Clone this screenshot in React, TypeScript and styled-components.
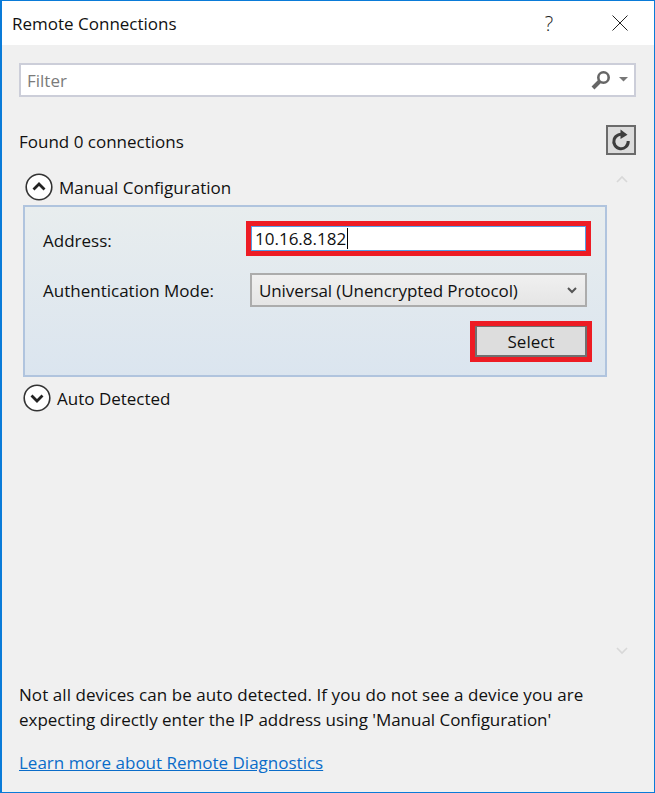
import React from 'react';
import styled, {createGlobalStyle} from 'styled-components';

const Global = createGlobalStyle`
  html, body {
    margin: 0;
    padding: 0;
    background: #efefef;
  }
  * {
    box-sizing: border-box;
  }
`;

const Window = styled.div`
  width: 655px;
  height: 793px;
  display: flex;
  flex-direction: column;
  background: #f0f0f0;
  border: 1px solid #0a7bd8;
  border-left-width: 2px;
  font-family: "Open Sans", "Noto Sans", sans-serif;
  font-size: 17px;
  color: #111;
`;

const TitleBar = styled.div`
  height: 44px;
  flex: 0 0 auto;
  background: #fff;
  display: flex;
  align-items: center;
  padding: 0 26px 0 10px;
`;

const Title = styled.div`
  flex: 1 1 auto;
`;

const HelpGlyph = styled.div`
  width: 16px;
  margin-right: 55px;
  text-align: center;
  font-size: 20px;
  font-weight: 300;
  color: #222;
`;

const Body = styled.div`
  flex: 1 1 auto;
  display: flex;
  flex-direction: column;
  padding: 18px 18px 0 17px;
`;

const FilterBox = styled.div`
  height: 34px;
  display: flex;
  align-items: center;
  padding: 0 3px 0 6px;
  background: #fff;
  border: 2px solid #ccced9;
`;

const FilterText = styled.div`
  flex: 1 1 auto;
  color: #7b7b7b;
`;

const FoundRow = styled.div`
  display: flex;
  align-items: center;
  justify-content: space-between;
  margin-top: 28px;
  height: 30px;
`;

const FoundText = styled.div`
  padding-top: 2px;
`;

const RefreshButton = styled.div`
  width: 30px;
  height: 30px;
  display: flex;
  align-items: center;
  justify-content: center;
  background: #dcdcdc;
  border: 2px solid #6b6b6b;
`;

const SectionHeader = styled.div<{$indent: number}>`
  display: flex;
  align-items: center;
  gap: 6px;
  height: 28px;
  padding-left: ${p => p.$indent}px;
`;

const ScrollArea = styled.div`
  flex: 1 1 auto;
  display: flex;
  margin-top: 18px;
`;

const ScrollContent = styled.div`
  width: 588px;
  flex: 0 0 auto;
`;

const ScrollBar = styled.div`
  flex: 1 1 auto;
  display: flex;
  flex-direction: column;
  align-items: center;
  justify-content: space-between;
  padding-top: 2px;
  height: 482px;
`;

const Panel = styled.div`
  width: 584px;
  height: 172px;
  margin: 4px 0 7px 4px;
  padding: 14px 20px 0 18px;
  background: linear-gradient(#e8edee, #dbe5ef);
  border: 2px solid #b0c4de;
`;

const FieldRow = styled.div`
  display: flex;
  align-items: center;
  height: 35px;
  margin-bottom: 16px;
`;

const FieldLabel = styled.div<{$drop: number}>`
  width: 207px;
  flex: 0 0 auto;
  padding-top: ${p => p.$drop}px;
`;

const HighlightBox = styled.div`
  border: 5px solid #ed1c24;
`;

const AddressHighlight = styled(HighlightBox)`
  width: 345px;
  height: 35px;
  margin-left: -4px;
  flex: 0 0 auto;
`;

const AddressInput = styled.div`
  height: 100%;
  display: flex;
  align-items: center;
  padding-left: 3px;
  background: #fff;
  border: 1px solid #569de5;
`;

const Caret = styled.span`
  display: inline-block;
  width: 1px;
  height: 21px;
  margin-left: 1px;
  background: #000;
`;

const Combo = styled.div`
  width: 337px;
  height: 34px;
  flex: 0 0 auto;
  display: flex;
  align-items: center;
  justify-content: space-between;
  padding: 1px 8px 0 7px;
  letter-spacing: -0.1px;
  background: linear-gradient(#f0f0f0, #e5e5e5);
  border: 2px solid #acacac;
`;

const ButtonRow = styled.div`
  display: flex;
  justify-content: flex-end;
  margin: -2px -7px 0 0;
`;

const SelectHighlight = styled(HighlightBox)`
  width: 122px;
  height: 41px;
`;

const SelectButton = styled.div`
  height: 100%;
  display: flex;
  align-items: center;
  justify-content: center;
  background: #dddddd;
  border: solid #707070;
  border-width: 1px 2px 2px 2px;
`;

const NoteLine = styled.div<{$spacing: number}>`
  line-height: 25px;
  white-space: nowrap;
  letter-spacing: ${p => p.$spacing}px;
`;

const LearnLink = styled.a`
  display: block;
  margin: 19px 0 17px;
  line-height: 24px;
  color: #0a6cc9;
  text-decoration: underline;
`;

const CircleIcon = ({up}: {up: boolean}) => (
  <svg width="28" height="28" viewBox="0 0 28 28">
    <circle cx="14" cy="14" r="12.8" fill="#fff" stroke="#333" strokeWidth="1.6"/>
    <path d={up ? 'M8.5 16.5 L14 11 L19.5 16.5' : 'M8.5 11.5 L14 17 L19.5 11.5'} fill="none" stroke="#222" strokeWidth="2.8"/>
  </svg>
);

const SearchIcon = () => (
  <svg width="44" height="24" viewBox="0 0 44 24">
    <circle cx="16.5" cy="9.5" r="5.2" fill="none" stroke="#666" strokeWidth="2.6"/>
    <path d="M12.5 13.5 L6 20" stroke="#666" strokeWidth="4"/>
    <path d="M32 9 H41 L36.5 13.5 Z" fill="#777"/>
  </svg>
);

const RefreshIcon = () => (
  <svg width="22" height="24" viewBox="0 0 22 24">
    <path d="M14.5 7.2 A7.2 7.2 0 1 0 18.2 13" fill="none" stroke="#3c3c3c" strokeWidth="3"/>
    <path d="M10.5 1.5 L17.5 6.8 L10.5 11 Z" fill="#3c3c3c"/>
  </svg>
);

const CloseIcon = () => (
  <svg width="16" height="16" viewBox="0 0 16 16">
    <path d="M0.5 0.5 L15.5 15.5 M15.5 0.5 L0.5 15.5" stroke="#222" strokeWidth="1"/>
  </svg>
);

const ChevronIcon = ({up, color}: {up: boolean; color: string}) => (
  <svg width="12" height="8" viewBox="0 0 12 8">
    <path d={up ? 'M1 7 L6 2 L11 7' : 'M1 1 L6 6 L11 1'} fill="none" stroke={color} strokeWidth="1.6"/>
  </svg>
);

const ComboChevron = () => (
  <svg width="10" height="7" viewBox="0 0 10 7">
    <path d="M1 1 L5 5 L9 1" fill="none" stroke="#555" strokeWidth="2"/>
  </svg>
);

const App = () => {
  return (
    <Window>
      <Global/>
      <TitleBar>
        <Title>Remote Connections</Title>
        <HelpGlyph>?</HelpGlyph>
        <CloseIcon/>
      </TitleBar>
      <Body>
        <FilterBox>
          <FilterText>Filter</FilterText>
          <SearchIcon/>
        </FilterBox>
        <FoundRow>
          <FoundText>Found 0 connections</FoundText>
          <RefreshButton><RefreshIcon/></RefreshButton>
        </FoundRow>
        <ScrollArea>
          <ScrollContent>
            <SectionHeader $indent={6}><CircleIcon up/>Manual Configuration</SectionHeader>
            <Panel>
              <FieldRow>
                <FieldLabel $drop={4}>Address:</FieldLabel>
                <AddressHighlight>
                  <AddressInput>10.16.8.182<Caret/></AddressInput>
                </AddressHighlight>
              </FieldRow>
              <FieldRow>
                <FieldLabel $drop={2}>Authentication Mode:</FieldLabel>
                <Combo>
                  Universal (Unencrypted Protocol)
                  <ComboChevron/>
                </Combo>
              </FieldRow>
              <ButtonRow>
                <SelectHighlight>
                  <SelectButton>Select</SelectButton>
                </SelectHighlight>
              </ButtonRow>
            </Panel>
            <SectionHeader $indent={4}><CircleIcon up={false}/>Auto Detected</SectionHeader>
          </ScrollContent>
          <ScrollBar>
            <ChevronIcon up color="#d8d8d8"/>
            <ChevronIcon up={false} color="#d8d8d8"/>
          </ScrollBar>
        </ScrollArea>
        <NoteLine $spacing={0.07}>Not all devices can be auto detected. If you do not see a device you are</NoteLine>
        <NoteLine $spacing={-0.03}>expecting directly enter the IP address using 'Manual Configuration'</NoteLine>
        <LearnLink href="#">Learn more about Remote Diagnostics</LearnLink>
      </Body>
    </Window>
  );
};

export default App;
